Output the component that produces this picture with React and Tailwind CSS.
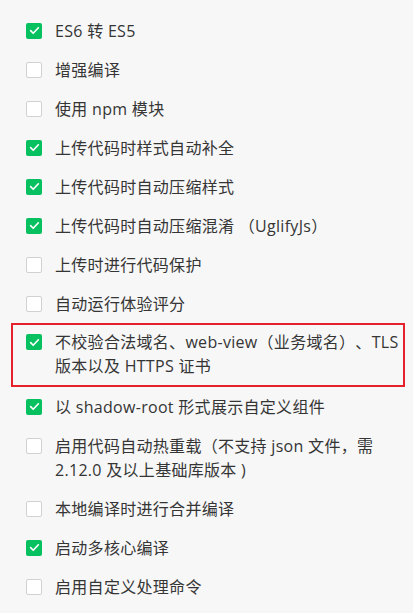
import React from "react";

const items = [
  { label: "ES6 转 ES5", checked: true },
  { label: "增强编译", checked: false },
  { label: "使用 npm 模块", checked: false },
  { label: "上传代码时样式自动补全", checked: true },
  { label: "上传代码时自动压缩样式", checked: true },
  { label: "上传代码时自动压缩混淆 （UglifyJs）", checked: true },
  { label: "上传时进行代码保护", checked: false },
  { label: "自动运行体验评分", checked: false },
  {
    label: ["不校验合法域名、web-view（业务域名）、TLS", "版本以及 HTTPS 证书"],
    checked: true,
    highlight: true,
  },
  { label: "以 shadow-root 形式展示自定义组件", checked: true },
  {
    label: ["启用代码自动热重载（不支持 json 文件，需", "2.12.0 及以上基础库版本 )"],
    checked: false,
  },
  { label: "本地编译时进行合并编译", checked: false },
  { label: "启动多核心编译", checked: true },
  { label: "启用自定义处理命令", checked: false },
];

const Checkbox = ({ checked }) =>
  checked ? (
    <span className="mt-[4px] flex h-4 w-4 shrink-0 items-center justify-center rounded-[2px] bg-[#07c160]">
      <svg className="h-[11px] w-[11px]" viewBox="0 0 12 12" fill="none">
        <path d="M1.8 6.2l2.8 2.8 5.6-6" stroke="#fff" strokeWidth="1.8" strokeLinecap="round" strokeLinejoin="round" />
      </svg>
    </span>
  ) : (
    <span className="mt-[4px] h-4 w-4 shrink-0 rounded-[2px] border border-[#d1d1d1] bg-white"></span>
  );

const Label = ({ label }) => (
  <span className="ml-[13px] text-[16px] leading-6 tracking-[0.3px] text-[#353535] [text-spacing-trim:space-all]">
    {Array.isArray(label)
      ? label.map((line, i) => (
          <span key={i} className="block whitespace-nowrap">
            {line}
          </span>
        ))
      : label}
  </span>
);

export default function App() {
  return (
    <div
      className="min-h-screen w-[413px] overflow-hidden bg-[#f7f7f7] pt-[11px]"
      style={{ fontFamily: '"Open Sans", "Noto Sans CJK SC", sans-serif' }}
    >
      {items.map((item, idx) =>
        item.highlight ? (
          <div key={idx} className="ml-[11px] mr-[8px] flex items-start border-2 border-[#e5222b] pb-[7px] pl-[13px] pt-[5px]">
            <Checkbox checked={item.checked} />
            <Label label={item.label} />
          </div>
        ) : (
          <div key={idx} className="flex items-start py-[7.5px] pl-[26px]">
            <Checkbox checked={item.checked} />
            <Label label={item.label} />
          </div>
        )
      )}
    </div>
  );
}
